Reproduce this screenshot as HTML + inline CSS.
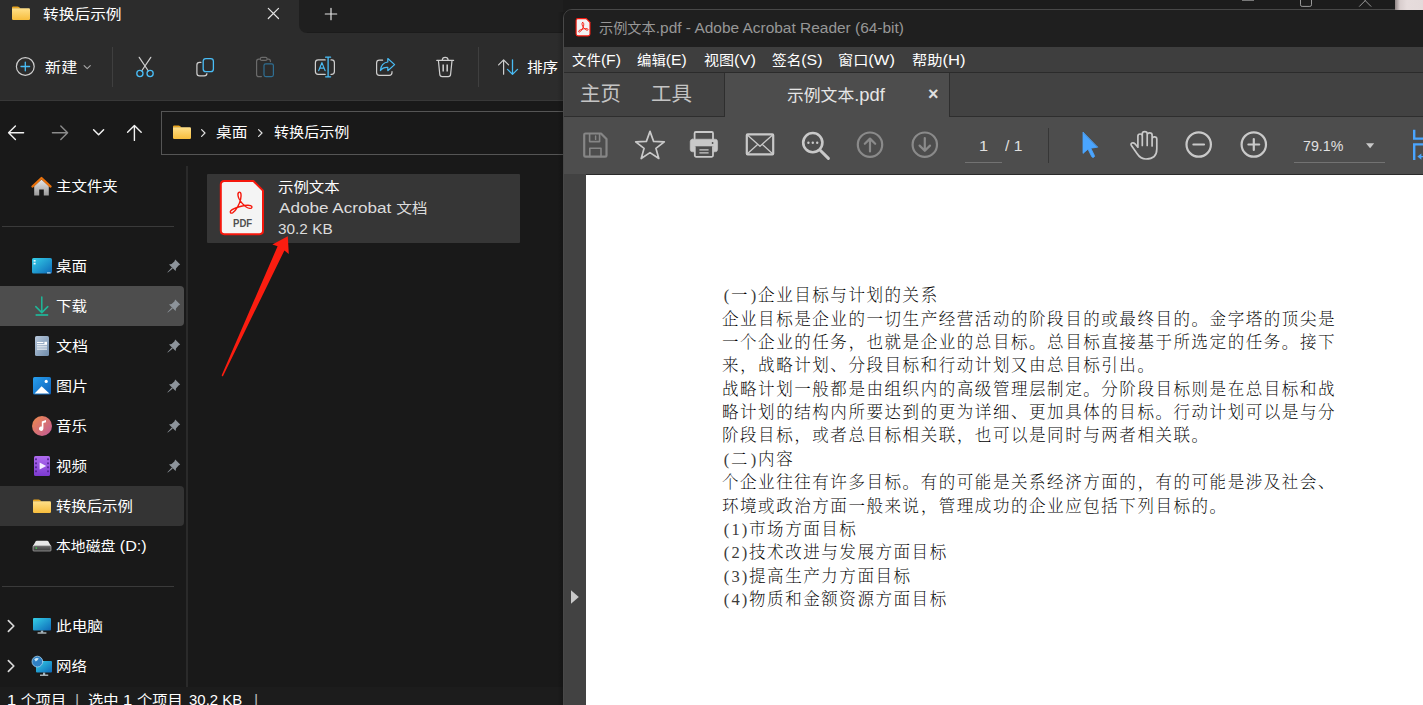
<!DOCTYPE html>
<html lang="zh-CN">
<head>
<meta charset="utf-8">
<title>转换后示例</title>
<style>
*{box-sizing:border-box;margin:0;padding:0}
html,body{width:1423px;height:705px;overflow:hidden;background:#191919}
body{position:relative;font-family:"Liberation Sans","Noto Sans CJK SC",sans-serif;font-size:14px;color:#fff;line-height:1}
.a{position:absolute}
.t{position:absolute;white-space:nowrap;line-height:20px;height:20px;transform-origin:0 50%}
.l{letter-spacing:1px}
svg.ov{position:absolute;left:0;top:0;width:1423px;height:705px;overflow:visible}
/* explorer */
#tabbar{left:0;top:0;width:563px;height:33px;background:#1f1f1f}
#tab{left:0;top:0;width:299px;height:33px;background:#2c2c2c}
#tabcurve{left:299px;top:25px;width:8px;height:8px;background:#2c2c2c;overflow:hidden}
#tabcurve i{position:absolute;left:0;top:-8px;width:16px;height:16px;border-radius:8px;background:#1f1f1f}
#tool{left:0;top:33px;width:563px;height:67px;background:#2c2c2c}
#toolline{left:0;top:100px;width:563px;height:1px;background:#383838}
#addr{left:161px;top:111px;width:410px;height:44px;border:1px solid #555}
#split{left:185.5px;top:166px;width:2px;height:522px;background:#2a2a2a}
#status{left:0;top:687px;width:563px;height:18px;background:#1c1c1c}
.sel1{left:0;top:286px;width:184px;height:40px;background:#4d4d4d;border-radius:0 4px 4px 0}
.sel2{left:0;top:486px;width:184px;height:40px;background:#343434;border-radius:0 4px 4px 0}
.hr{left:2px;width:172px;height:1px;background:#3a3a3a}
.vsep{width:1px;height:40px;top:47px;background:#3f3f3f}
.nav{left:57px}
#file{left:207px;top:174px;width:313px;height:69px;background:#363636;border-radius:1px}
/* acrobat */
#bgtop{left:563px;top:0;width:860px;height:12px;background:#1c1c1c}
#shadow{left:557px;top:12px;width:6px;height:693px;background:linear-gradient(90deg,rgba(0,0,0,0),rgba(0,0,0,.18))}
#acro{left:563px;top:9px;width:880px;height:700px;background:#1f1f1f;border:1px solid #484848;border-radius:9px 0 0 0;overflow:hidden}
#acro .in{position:absolute;left:-564px;top:-10px;width:1423px;height:705px}
#atitle{left:564px;top:10px;width:860px;height:37px;background:#1f1f1f}
#amenu{left:564px;top:47px;width:860px;height:26px;background:#3e3e3e}
#amenuline{left:564px;top:72px;width:860px;height:1px;background:#2b2b2b}
#atabs{left:564px;top:73px;width:860px;height:44px;background:#424242}
#atab{left:724px;top:73px;width:226px;height:45px;background:#4d4d4d;border-left:1px solid #2e2e2e;border-right:1px solid #2e2e2e}
#atabline{left:564px;top:116px;width:161px;height:1px;background:#2e2e2e}
#atabline2{left:949px;top:116px;width:480px;height:1px;background:#2e2e2e}
#atool{left:564px;top:117px;width:860px;height:57px;background:#4d4d4d}
#atoolline{left:586px;top:174px;width:860px;height:1px;background:#2a2a2a}
#apane{left:564px;top:174px;width:22px;height:532px;background:#424242}
#page{left:586px;top:175px;width:840px;height:531px;background:#fff}
.u{height:1px;background:#727272;top:162px}
.pdf{position:absolute;left:722px;white-space:nowrap;font-family:"Liberation Serif","Noto Serif CJK SC",serif;font-size:16.5px;font-weight:200;color:#000;line-height:24px;height:24px;letter-spacing:1.56px}
.pdf .h{display:inline-block;width:9.03px;text-align:center;letter-spacing:0;color:#3c3c3c}
.la{font-size:1.09em}
</style>
</head>
<body>
<!-- ===== Explorer window ===== -->
<div class="a" id="tabbar"></div>
<div class="a" id="tab"></div>
<div class="a" id="tabcurve"><i></i></div>
<div class="a" id="tool"></div>
<div class="a" id="tabshade" style="left:307px;top:32px;width:256px;height:1px;background:#1b1b1b"></div>
<div class="a" id="toolline"></div>
<div class="a vsep" style="left:112px"></div>
<div class="a vsep" style="left:478px"></div>
<div class="a" id="addr"></div>
<div class="a" id="split"></div>
<div class="a sel1"></div>
<div class="a sel2"></div>
<div class="a hr" style="top:226px"></div>
<div class="a hr" style="top:586px"></div>
<div class="a" id="file"></div>
<div class="a" id="status"></div>
<div class="t" id="x1" style="left:43.00px;top:4.10px;transform:scaleX(1.1226)">转换后示例</div>
<div class="t" id="x2" style="left:45.10px;top:56.90px;transform:scaleX(1.1528)">新建</div>
<div class="t" id="x3" style="left:527.30px;top:56.90px;transform:scaleX(1.1149)">排序</div>
<div class="t" id="x4" style="left:216.00px;top:122.10px;transform:scaleX(1.1250)">桌面</div>
<div class="t" id="x5" style="left:274.10px;top:122.10px;transform:scaleX(1.0760)">转换后示例</div>
<div class="t" id="s1" style="left:56.30px;top:176.10px;transform:scaleX(1.1037)">主文件夹</div>
<div class="t" id="s2" style="left:56.00px;top:256.10px;transform:scaleX(1.1100)">桌面</div>
<div class="t" id="s3" style="left:56.00px;top:296.10px;transform:scaleX(1.1069)">下载</div>
<div class="t" id="s4" style="left:56.00px;top:336.10px;transform:scaleX(1.1464)">文档</div>
<div class="t" id="s5" style="left:56.00px;top:376.10px;transform:scaleX(1.1464)">图片</div>
<div class="t" id="s6" style="left:56.00px;top:416.10px;transform:scaleX(1.1100)">音乐</div>
<div class="t" id="s7" style="left:56.00px;top:456.10px;transform:scaleX(1.1069)">视频</div>
<div class="t" id="s8" style="left:56.00px;top:496.10px;transform:scaleX(1.0963)">转换后示例</div>
<div class="t" id="s9" style="left:56.00px;top:536.10px;transform:scaleX(1.0587)">本地磁盘<span class="la"> (D:)</span></div>
<div class="t" id="s10" style="left:56.00px;top:616.10px;transform:scaleX(1.1198)">此电脑</div>
<div class="t" id="s11" style="left:56.00px;top:656.10px;transform:scaleX(1.1014)">网络</div>
<div class="t" id="f1" style="left:277.60px;top:177.10px;transform:scaleX(1.0997)">示例文本</div>
<div class="t" id="f2" style="left:278.50px;top:198.10px;transform:scaleX(1.1231);color:#dcdcdc"><span class="la">Adobe Acrobat </span>文档</div>
<div class="t" id="f3" style="left:277.50px;top:219.10px;transform:scaleX(1.0066);color:#dcdcdc"><span class="la">30.2 KB</span></div>
<div class="t" id="st1" style="left:6.60px;top:689.90px;transform:scaleX(1.0788)"><span class="la">1 </span>个项目</div>
<div class="t" id="st2" style="left:74.80px;top:689.90px;transform:scaleX(1.0700);color:#b4b4b4"><span class="la">|</span></div>
<div class="t" id="st3" style="left:88.00px;top:689.90px;transform:scaleX(1.0894)">选中<span class="la"> 1 </span>个项目</div>
<div class="t" id="st4" style="left:188.90px;top:689.90px;transform:scaleX(0.9804)"><span class="la">30.2 KB</span></div>
<div class="t" id="st5" style="left:254.30px;top:689.90px;transform:scaleX(1.0700);color:#b4b4b4"><span class="la">|</span></div>
<svg class="ov" viewBox="0 0 1423 705" fill="none" stroke-linecap="round" stroke-linejoin="round">
<defs>
<linearGradient id="fg" x1="0" y1="0" x2="0" y2="1"><stop offset="0" stop-color="#ffe08a"/><stop offset="1" stop-color="#f7bd3c"/></linearGradient>
<linearGradient id="dg" x1="0" y1="0" x2="1" y2="1"><stop offset="0" stop-color="#35d0e8"/><stop offset="1" stop-color="#0d68b8"/></linearGradient>
<linearGradient id="docg" x1="0" y1="0" x2="1" y2="1"><stop offset="0" stop-color="#b9c9dc"/><stop offset="1" stop-color="#6f8cab"/></linearGradient>
<linearGradient id="picg" x1="0" y1="0" x2="1" y2="1"><stop offset="0" stop-color="#27a0f0"/><stop offset="1" stop-color="#0d5fb8"/></linearGradient>
<linearGradient id="musg" x1="0" y1="0" x2="1" y2="1"><stop offset="0" stop-color="#f08c4a"/><stop offset="1" stop-color="#c0589a"/></linearGradient>
<linearGradient id="vidg" x1="0" y1="0" x2="0" y2="1"><stop offset="0" stop-color="#b06cf0"/><stop offset="1" stop-color="#7c3ad0"/></linearGradient>
<linearGradient id="homeg" x1="0" y1="0" x2="0" y2="1"><stop offset="0" stop-color="#e8e8e8"/><stop offset="1" stop-color="#9a9a9a"/></linearGradient>
<linearGradient id="diskg" x1="0" y1="0" x2="0" y2="1"><stop offset="0" stop-color="#6a6a6a"/><stop offset="1" stop-color="#3a3a3a"/></linearGradient>
</defs>
<!-- tab folder -->
<g transform="translate(12,6)" stroke="none"><path d="M0 1.6Q0 .4 1.2 .4H5.6Q6.4 .4 7 1L8.6 2.6H0Z" fill="#e9a520"/><path d="M0 2.2H16.8Q18 2.2 18 3.4V12.8Q18 14 16.8 14H1.2Q0 14 0 12.8Z" fill="url(#fg)"/></g>
<!-- tab close / plus -->
<path d="M268.3 8.3L278.5 18.5M278.5 8.3L268.3 18.5" stroke="#e4e4e4" stroke-width="1.2"/>
<path d="M325.3 14H336.7M331 8.3V19.7" stroke="#e4e4e4" stroke-width="1.2"/>
<!-- new -->
<circle cx="25.3" cy="66.5" r="8.9" stroke="#cfcfcf" stroke-width="1.2"/>
<path d="M21 66.5H29.6M25.3 62.2V70.8" stroke="#49bdf6" stroke-width="1.3"/>
<path d="M84.1 65.6L87.2 68.7L90.3 65.6" stroke="#a8a8a8" stroke-width="1.1"/>
<!-- cut -->
<path d="M139.2 57.3L148.4 71M150.8 57.3L141.6 71" stroke="#cfcfcf" stroke-width="1.2"/>
<circle cx="139.9" cy="73.5" r="3.1" stroke="#49bdf6" stroke-width="1.3"/><circle cx="150.1" cy="73.5" r="3.1" stroke="#49bdf6" stroke-width="1.3"/>
<!-- copy -->
<path d="M201 62.3H199.6Q196.9 62.3 196.9 65V73.2Q196.9 75.9 199.6 75.9H204.2Q206.9 75.9 206.9 73.6" stroke="#cfcfcf" stroke-width="1.2"/>
<rect x="203.2" y="58.6" width="10.2" height="13" rx="2.7" stroke="#49bdf6" stroke-width="1.3"/>
<!-- paste (disabled) -->
<path d="M260 59.2H258.8Q256.6 59.2 256.6 61.4V74.4Q256.6 76.6 258.8 76.6H261.4M267.4 59.2H268.4Q270.4 59.2 270.4 61.2V61.6" stroke="#6b6b6b" stroke-width="1.2"/>
<rect x="260.3" y="57.4" width="6.8" height="3" rx="1.5" stroke="#6b6b6b" stroke-width="1.1"/>
<rect x="264" y="63.8" width="9.4" height="12.8" rx="1.8" stroke="#2f6f93" stroke-width="1.2"/>
<!-- rename -->
<path d="M325.2 59.9H318.2Q315.4 59.9 315.4 62.7V71.6Q315.4 74.4 318.2 74.4H325.2M331 59.9H331.6Q334.4 59.9 334.4 62.7V71.6Q334.4 74.4 331.6 74.4H331" stroke="#cfcfcf" stroke-width="1.2"/>
<path d="M325.6 57.2H330.6M325.6 76.8H330.6M328.1 57.2V76.8" stroke="#49bdf6" stroke-width="1.3"/>
<path d="M318.7 70.6L321.9 62.6L325.1 70.6M319.8 68.2H324" stroke="#49bdf6" stroke-width="1.2"/>
<!-- share -->
<path d="M382.6 60.2H379.4Q376.6 60.2 376.6 63V72.6Q376.6 75.4 379.4 75.4H389.2Q392 75.4 392 72.6V71.6" stroke="#cfcfcf" stroke-width="1.2"/>
<path d="M387.8 58.5L394.6 64.6L387.8 70.7V67.4Q383 67 380.4 70.6Q381 63 387.8 62Z" stroke="#49bdf6" stroke-width="1.2"/>
<!-- delete -->
<path d="M436.8 60.4H453.6M442.2 60.2Q442.4 57.4 445.2 57.4Q448 57.4 448.2 60.2M438.4 60.6L439.8 74.4Q440 76.6 442.2 76.6H448.2Q450.4 76.6 450.6 74.4L452 60.6" stroke="#cfcfcf" stroke-width="1.2"/>
<path d="M443.2 64.6V71.4M447.2 64.6V71.4" stroke="#c4c4c4" stroke-width="1.6" stroke-linecap="butt"/>
<!-- sort -->
<path d="M503.6 60V74.2M498.6 64.8L503.6 59.8L508.6 64.8" stroke="#cfcfcf" stroke-width="1.2"/>
<path d="M512.5 59.8V74.2M507.5 69.4L512.5 74.4L517.5 69.4" stroke="#49bdf6" stroke-width="1.3"/>
<!-- nav arrows -->
<path d="M8.8 132.8H23.6M15.4 126L8.6 132.8L15.4 139.6" stroke="#f2f2f2" stroke-width="1.4"/>
<path d="M52.4 132.8H67.4M60.8 126L67.6 132.8L60.8 139.6" stroke="#8c8c8c" stroke-width="1.4"/>
<path d="M93.6 129.8L98.6 134.8L103.6 129.8" stroke="#f2f2f2" stroke-width="1.5"/>
<path d="M134.4 125.6V140.4M127.6 132.2L134.4 125.4L141.2 132.2" stroke="#f2f2f2" stroke-width="1.4"/>
<!-- address folder -->
<g transform="translate(173,125)" stroke="none"><path d="M0 1.6Q0 .4 1.2 .4H5.6Q6.4 .4 7 1L8.6 2.6H0Z" fill="#e9a520"/><path d="M0 2.2H16.8Q18 2.2 18 3.4V12.8Q18 14 16.8 14H1.2Q0 14 0 12.8Z" fill="url(#fg)"/></g>
<path d="M201.6 129.6L205 133L201.6 136.4" stroke="#e0e0e0" stroke-width="1.2"/>
<path d="M258.6 129.6L262 133L258.6 136.4" stroke="#e0e0e0" stroke-width="1.2"/>
<!-- sidebar: home -->
<g stroke="none"><path d="M34.2 186V195.4H39.2V189.6H43.8V195.4H48.8V186L41.5 179.4Z" fill="url(#homeg)"/><path d="M32.4 186.6L41.5 178L50.6 186.6" stroke="#e8710c" stroke-width="2.2" fill="none" stroke-linecap="round"/></g>
<!-- desktop -->
<g stroke="none"><rect x="32" y="258" width="20" height="15.6" rx="1.6" fill="url(#dg)"/><rect x="33.6" y="260" width="2" height="1.6" fill="#e8f8ff"/><rect x="33.6" y="262.8" width="2" height="1.6" fill="#e8f8ff"/><rect x="47" y="272.4" width="3.6" height="1" fill="#cfe9f7"/></g>
<!-- download -->
<path d="M41.8 297V312.4M35.8 306.6L41.8 312.6L47.8 306.6" stroke="#1fb89a" stroke-width="1.5"/><path d="M35.6 315H48.2" stroke="#1fb89a" stroke-width="1.7" stroke-linecap="butt"/>
<!-- documents -->
<g stroke="none"><rect x="35" y="336" width="14" height="20" rx="1.6" fill="url(#docg)"/><rect x="37" y="342" width="6.4" height="1" fill="#fff"/><rect x="37" y="344.2" width="10" height="1" fill="#fff"/><rect x="37" y="346.4" width="10" height="1" fill="#fff"/><rect x="37" y="348.6" width="10" height="1" fill="#fff"/><rect x="44.4" y="341.8" width="2.6" height="2.4" fill="#fff"/></g>
<!-- pictures -->
<g stroke="none"><rect x="33" y="377" width="18" height="17.6" rx="1.6" fill="url(#picg)"/><path d="M34.6 393.4L41.6 386.2L49.4 393.4Z" fill="#fff"/><circle cx="46.2" cy="381.4" r="1.6" fill="#fff"/></g>
<!-- music -->
<g stroke="none"><circle cx="42" cy="426" r="10" fill="url(#musg)"/><path d="M41.8 421.4L46 420V422.2L43.4 423V428.6A2.2 2.2 0 1 1 41.8 426.6Z" fill="#fff"/></g>
<!-- video -->
<g stroke="none"><rect x="34" y="456" width="16" height="20" rx="1.6" fill="url(#vidg)"/><path d="M39.6 462.4L46.2 466L39.6 469.6Z" fill="#f3eaff"/><g fill="#4a1f8a"><rect x="35.2" y="458.4" width="1.6" height="1.8"/><rect x="35.2" y="462.4" width="1.6" height="1.8"/><rect x="35.2" y="466.4" width="1.6" height="1.8"/><rect x="35.2" y="470.4" width="1.6" height="1.8"/><rect x="47.2" y="458.4" width="1.6" height="1.8"/><rect x="47.2" y="462.4" width="1.6" height="1.8"/><rect x="47.2" y="466.4" width="1.6" height="1.8"/><rect x="47.2" y="470.4" width="1.6" height="1.8"/></g></g>
<!-- sidebar folder -->
<g transform="translate(33,499)" stroke="none"><path d="M0 1.6Q0 .4 1.2 .4H5.6Q6.4 .4 7 1L8.6 2.6H0Z" fill="#e9a520"/><path d="M0 2.2H16.8Q18 2.2 18 3.4V12.8Q18 14 16.8 14H1.2Q0 14 0 12.8Z" fill="url(#fg)"/></g>
<!-- disk -->
<g stroke="none"><path d="M33 546L35.6 541.4Q36 540.8 36.8 540.8H47.2Q48 540.8 48.4 541.4L51 546Z" fill="#e6e6e6"/><rect x="33" y="545.6" width="18" height="5.4" rx=".8" fill="url(#diskg)" stroke="#cfcfcf" stroke-width=".6"/><rect x="35.6" y="547.4" width="1.4" height="1.4" fill="#3fd34a"/></g>
<!-- this pc -->
<g stroke="none"><rect x="33" y="618" width="18" height="12.6" rx="1" fill="url(#dg)"/><rect x="40.8" y="630.6" width="2.4" height="2" fill="#9fb4c0"/><rect x="37.6" y="632.4" width="8.8" height="1.2" fill="#c8d4da"/></g>
<!-- network -->
<g stroke="none"><rect x="36" y="661" width="16" height="11.6" rx="1" fill="url(#dg)"/><rect x="43" y="672.6" width="2.2" height="2.4" fill="#9fb4c0"/><rect x="40" y="674.6" width="8.2" height="1.2" fill="#c8d4da"/><circle cx="37.4" cy="661.6" r="5.4" fill="#2f80c4" stroke="#9fd0f0" stroke-width=".8"/><path d="M34.2 659.2Q36.6 657.4 38.8 658.6Q37.6 660.6 35.8 661.6Z" fill="#cfeaf8"/></g>
<!-- expand chevrons -->
<path d="M8.4 620.6L13.8 626L8.4 631.4" stroke="#d8d8d8" stroke-width="1.7"/>
<path d="M8.4 660.6L13.8 666L8.4 671.4" stroke="#d8d8d8" stroke-width="1.7"/>
<!-- pins -->
<g fill="#8d949b" stroke="none">
<g transform="translate(167,259)"><path d="M8.2 .6L13.2 5.6L11.6 6.6L9 9.4L8.6 12L2 5.4L4.6 5L7.4 2.4Z"/><path d="M4.8 8.4L5.8 9.4L.8 13.6L.4 13.2Z"/></g>
<g transform="translate(167,299)"><path d="M8.2 .6L13.2 5.6L11.6 6.6L9 9.4L8.6 12L2 5.4L4.6 5L7.4 2.4Z"/><path d="M4.8 8.4L5.8 9.4L.8 13.6L.4 13.2Z"/></g>
<g transform="translate(167,339)"><path d="M8.2 .6L13.2 5.6L11.6 6.6L9 9.4L8.6 12L2 5.4L4.6 5L7.4 2.4Z"/><path d="M4.8 8.4L5.8 9.4L.8 13.6L.4 13.2Z"/></g>
<g transform="translate(167,379)"><path d="M8.2 .6L13.2 5.6L11.6 6.6L9 9.4L8.6 12L2 5.4L4.6 5L7.4 2.4Z"/><path d="M4.8 8.4L5.8 9.4L.8 13.6L.4 13.2Z"/></g>
<g transform="translate(167,419)"><path d="M8.2 .6L13.2 5.6L11.6 6.6L9 9.4L8.6 12L2 5.4L4.6 5L7.4 2.4Z"/><path d="M4.8 8.4L5.8 9.4L.8 13.6L.4 13.2Z"/></g>
<g transform="translate(167,459)"><path d="M8.2 .6L13.2 5.6L11.6 6.6L9 9.4L8.6 12L2 5.4L4.6 5L7.4 2.4Z"/><path d="M4.8 8.4L5.8 9.4L.8 13.6L.4 13.2Z"/></g>
</g>
<!-- pdf file icon -->
<path d="M224.4 181H253.4L263 190.6V230.6Q263 234.2 259.4 234.2H224.4Q220.8 234.2 220.8 230.6V184.6Q220.8 181 224.4 181Z" fill="#f4f4f4" stroke="#f5170c" stroke-width="2"/>
<path d="M239.2 192.2C241 191.6 241.6 195 240.6 199.4C239.6 204 236 211 232.6 212.8C230.6 213.8 229.6 212.2 230.8 210.8C233.6 207.6 246.6 204.2 250.6 205.6C252.8 206.4 252.2 208.6 249.8 208.4C245 208 238.4 199.8 238 195.2C237.8 193.4 238.4 192.4 239.2 192.2Z" stroke="#f5170c" stroke-width="1.4" fill="none"/>
<!-- red arrow -->
<path d="M221.6 375.6L277.6 246.2L272.4 244.6L287.8 236.2L288.8 254L284.4 250.4L222.8 376.6Z" fill="#fb1d10" stroke="none"/>
</svg>
<div class="t" style="left:232.6px;top:213.4px;font-size:11.4px;font-weight:bold;color:#505050;transform:scaleX(.84)">PDF</div>
<!-- ===== Background window strip ===== -->
<div class="a" id="bgtop"></div>
<svg class="ov" viewBox="0 0 1423 705" fill="none"><rect x="1242" y="-1" width="12" height="1.6" fill="#b4b4b4"/><rect x="1300.5" y="-6" width="11" height="12.4" rx="1.6" stroke="#9a9a9a" stroke-width="1"/><path d="M1359.2 6.6L1365.2 .6L1371.2 6.6" stroke="#9a9a9a" stroke-width="1"/><path d="M1365.2 .6L1364.4 -1M1365.2 .6L1366 -1" stroke="#9a9a9a" stroke-width="1"/></svg>
<div class="a" id="shadow"></div>
<!-- ===== Acrobat window ===== -->
<div class="a" id="acro"><div class="in">
<div class="a" id="atitle"></div>
<div class="a" id="amenu"></div>
<div class="a" id="amenuline"></div>
<div class="a" id="atabs"></div>
<div class="a" id="atabline"></div>
<div class="a" id="atabline2"></div>
<div class="a" id="atab"></div>
<div class="a" id="atool"></div>
<div class="a" id="atoolline"></div>
<div class="a" id="apane"></div>
<div class="a" id="page"></div>
<div class="t" style="left:928px;top:84px;font-size:18px;color:#e0e0e0;font-weight:bold">×</div>
<div class="a u" style="left:965px;width:37px"></div>
<div class="a u" style="left:1294px;width:91px"></div>
<div class="a" style="left:1048px;top:128px;width:1px;height:35px;background:#363636"></div>
<div class="t" id="a0" style="left:599.00px;top:18.00px;transform:scaleX(1.0132);color:#979797">示例文本<span class="la">.pdf - Adobe Acrobat Reader (64-bit)</span></div>
<div class="t" id="m1" style="left:571.70px;top:50.30px;transform:scaleX(1.0313)">文件<span class="la">(F)</span></div>
<div class="t" id="m2" style="left:637.40px;top:50.30px;transform:scaleX(1.0272)">编辑<span class="la">(E)</span></div>
<div class="t" id="m3" style="left:704.10px;top:50.30px;transform:scaleX(1.0744)">视图<span class="la">(V)</span></div>
<div class="t" id="m4" style="left:772.10px;top:50.30px;transform:scaleX(1.0448)">签名<span class="la">(S)</span></div>
<div class="t" id="m5" style="left:838.40px;top:50.30px;transform:scaleX(1.0825)">窗口<span class="la">(W)</span></div>
<div class="t" id="m6" style="left:912.30px;top:50.30px;transform:scaleX(1.0875)">帮助<span class="la">(H)</span></div>
<div class="t" id="t1" style="left:580.20px;top:84.00px;transform:scaleX(1.0231);font-size:20px;font-weight:400;color:#c4c4c4">主页</div>
<div class="t" id="t2" style="left:651.20px;top:84.00px;transform:scaleX(1.0240);font-size:20px;font-weight:400;color:#c4c4c4">工具</div>
<div class="t" id="t3" style="left:786.70px;top:84.50px;transform:scaleX(1.0256);font-size:16.4px;color:#e6e6e6">示例文本<span class="la">.pdf</span></div>
<div class="t" id="p1" style="left:979.00px;top:135.60px;transform:scaleX(1.0700);color:#e0e0e0"><span class="la">1</span></div>
<div class="t" id="p2" style="left:1005.10px;top:135.60px;transform:scaleX(1.0240);color:#e0e0e0"><span class="la">/ 1</span></div>
<div class="t" id="p3" style="left:1302.70px;top:135.60px;transform:scaleX(0.9331);color:#e0e0e0"><span class="la">79.1%</span></div>
<svg class="ov" viewBox="0 0 1423 705" fill="none" stroke-linecap="round" stroke-linejoin="round">
<!-- title icon -->
<path d="M578 18.6H586.2L590 22.4V34Q590 35.9 588.1 35.9H578Q576.1 35.9 576.1 34V20.5Q576.1 18.6 578 18.6Z" fill="#f3f3f3" stroke="#f5170c" stroke-width="1.1"/>
<path d="M582.7 22.5C583.8 22.3 584 24.2 583.5 26.2C583 28.4 581.2 31.2 579.6 32C578.6 32.4 578.2 31.4 579 30.6C580.6 29.2 586 28 587.6 28.8C588.6 29.4 588 30.4 586.8 30.2C584.8 29.8 582.2 26.4 582 24.2C581.9 23.2 582.2 22.6 582.7 22.5Z" stroke="#f5170c" stroke-width=".9"/>
<!-- save (disabled) -->
<g stroke="#868686" stroke-width="2.2">
<path d="M585.4 133.5H601L606.5 139V155.4Q606.5 156.6 605.3 156.6H585.4Q584.2 156.6 584.2 155.4V134.7Q584.2 133.5 585.4 133.5Z"/>
<path d="M589.6 133.8V141.6H599.6V133.8M589.8 156.4V148.2H601V156.4" stroke-width="1.6"/>
<path d="M595.6 136V139.4" stroke-width="1.4"/>
</g>
<!-- star -->
<path d="M650.0 131.4L653.6 141.4L664.3 141.8L655.9 148.3L658.8 158.5L650.0 152.6L641.2 158.5L644.1 148.3L635.7 141.8L646.4 141.4Z" stroke="#c9c9c9" stroke-width="1.7"/>
<!-- print -->
<g stroke="#c9c9c9">
<path d="M694.6 139V133.2Q694.6 132 695.8 132H711.8Q713 132 713 133.2V139" stroke-width="1.8"/>
<path d="M692.6 139.2H715.2Q717.6 139.2 717.6 141.6V149.4Q717.6 151.8 715.2 151.8H713.6V146H694.2V151.8H692.6Q690.2 151.8 690.2 149.4V141.6Q690.2 139.2 692.6 139.2Z" fill="#c9c9c9" stroke-width=".6"/>
<path d="M694.8 147V155.6Q694.8 156.8 696 156.8H711.8Q713 156.8 713 155.6V147" stroke-width="1.8"/>
<path d="M699.4 149.8H708.6M699.4 152.8H708.6" stroke-width="1.2" stroke-linecap="butt"/>
</g>
<circle cx="712.6" cy="143" r=".9" fill="#4d4d4d"/>
<!-- mail -->
<g stroke="#c9c9c9"><rect x="746.8" y="134.4" width="26.4" height="20" rx=".8" stroke-width="2.2"/><path d="M747.4 135L760 146.2L772.6 135M747.4 153.8L757.6 144.4M772.6 153.8L762.4 144.4" stroke-width="1.3"/></g>
<!-- search -->
<g stroke="#c9c9c9"><circle cx="812.8" cy="142.6" r="9.6" stroke-width="2.6"/><path d="M820.2 150.2L828.4 158.4" stroke-width="3"/></g>
<g fill="#c9c9c9"><circle cx="808.4" cy="142.8" r="1.2"/><circle cx="812.8" cy="142.8" r="1.2"/><circle cx="817.2" cy="142.8" r="1.2"/></g>
<!-- up / down (disabled) -->
<g stroke="#8a8a8a" stroke-width="2.2"><circle cx="870" cy="144.7" r="12.2"/><path d="M870 138.6V151.4M864.8 143.8L870 138.6L875.2 143.8"/>
<circle cx="924.8" cy="144.7" r="12.2"/><path d="M924.8 138V150.8M919.6 145.6L924.8 150.8L930 145.6"/></g>
<!-- pointer -->
<path d="M1083 132.4V153.4L1088 149.2L1091.8 156.8Q1092.6 157.8 1093.8 157.2Q1095 156.6 1094.4 155.4L1090.8 148.2L1097.4 147.2Z" fill="#4aa5ff" stroke="#4aa5ff" stroke-width=".8"/>
<!-- hand -->
<g stroke="#c9c9c9" stroke-width="1.7">
<path d="M1137.9 147.2V136.2Q1137.9 134 1140.1 134Q1142.3 134 1142.3 136.2V145.4M1142.3 136V133.8Q1142.3 131.6 1144.75 131.6Q1147.2 131.6 1147.2 133.8V145.4M1147.2 136V135Q1147.2 132.9 1149.65 132.9Q1152.1 132.9 1152.1 135V146M1152.1 139Q1152.1 136.8 1154.45 136.8Q1156.8 136.8 1156.8 139V149Q1156.8 159 1146 159Q1140.5 159 1137 153.5L1131.4 145.6Q1130.4 143.8 1132 143Q1133.6 142.4 1135 143.8L1137.9 147.2"/>
</g>
<!-- zoom minus / plus -->
<g stroke="#c9c9c9" stroke-width="2.2"><circle cx="1198.7" cy="144.5" r="12.2"/><path d="M1193.4 144.5H1204"/>
<circle cx="1253.8" cy="144.5" r="12.2"/><path d="M1248.4 144.5H1259.2M1253.8 139.1V149.9"/></g>
<path d="M1366 143.2H1374.2L1370.1 148.2Z" fill="#c9c9c9"/>
<!-- fit icon (partial) -->
<g stroke="#4aa5ff" stroke-width="2.4" stroke-linecap="butt" stroke-linejoin="miter"><path d="M1414.2 129.8V138.6H1424"/><path d="M1424 144.4H1414.2V160"/></g>
<path d="M1417.4 156.6L1421.4 153.4V159.8Z" fill="#4aa5ff"/><path d="M1420 156.6H1424" stroke="#4aa5ff" stroke-width="1.4"/>
<!-- left pane toggle -->
<path d="M571 590.2L578.8 597L571 603.8Z" fill="#c9c9c9"/>
</svg>
<div class="pdf" style="top:284.3px"><span class="h">(</span>一<span class="h">)</span>企业目标与计划的关系</div>
<div class="pdf" style="top:308.3px">企业目标是企业的一切生产经营活动的阶段目的或最终目的。金字塔的顶尖是</div>
<div class="pdf" style="top:331.3px">一个企业的任务，也就是企业的总目标。总目标直接基于所选定的任务。接下</div>
<div class="pdf" style="top:354.3px">来，战略计划、分段目标和行动计划又由总目标引出。</div>
<div class="pdf" style="top:378.3px">战略计划一般都是由组织内的高级管理层制定。分阶段目标则是在总目标和战</div>
<div class="pdf" style="top:401.3px">略计划的结构内所要达到的更为详细、更加具体的目标。行动计划可以是与分</div>
<div class="pdf" style="top:424.3px">阶段目标，或者总目标相关联，也可以是同时与两者相关联。</div>
<div class="pdf" style="top:448.3px"><span class="h">(</span>二<span class="h">)</span>内容</div>
<div class="pdf" style="top:471.3px">个企业往往有许多目标。有的可能是关系经济方面的，有的可能是涉及社会、</div>
<div class="pdf" style="top:495.3px">环境或政治方面一般来说，管理成功的企业应包括下列目标的。</div>
<div class="pdf" style="top:518.3px"><span class="h">(</span><span class="h">1</span><span class="h">)</span>市场方面目标</div>
<div class="pdf" style="top:541.3px"><span class="h">(</span><span class="h">2</span><span class="h">)</span>技术改进与发展方面目标</div>
<div class="pdf" style="top:565.3px"><span class="h">(</span><span class="h">3</span><span class="h">)</span>提高生产力方面目标</div>
<div class="pdf" style="top:588.3px"><span class="h">(</span><span class="h">4</span><span class="h">)</span>物质和金额资源方面目标</div>
</div></div>
<div class="a" style="left:1395px;top:0;width:28px;height:10px;background:linear-gradient(90deg,#8e8484 0,#d8cdcd 5px,#e6dcdc 12px,#e4dada 28px)"></div>
</body>
</html>
